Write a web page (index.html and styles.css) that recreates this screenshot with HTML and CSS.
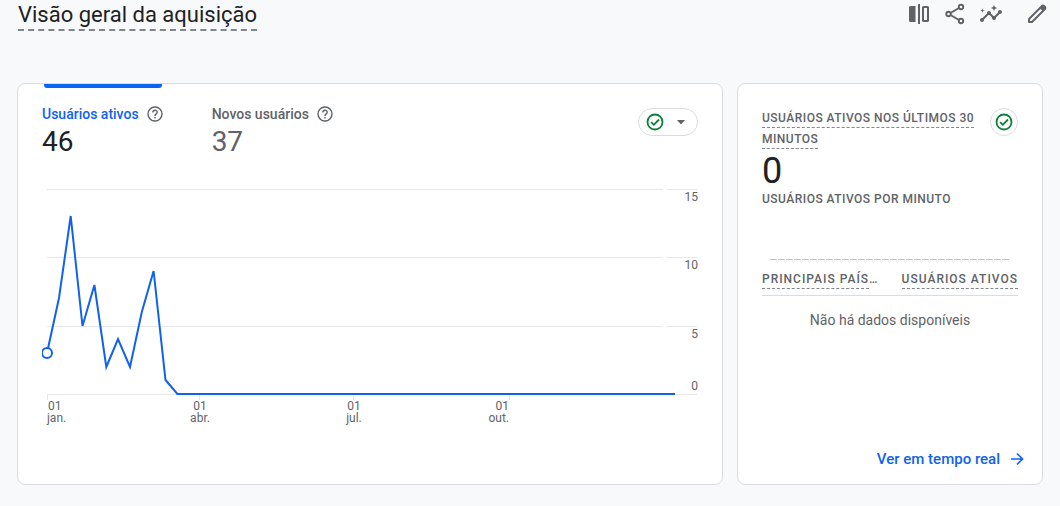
FILE: index.html
```html
<!DOCTYPE html>
<html lang="pt-BR">
<head>
<meta charset="utf-8">
<title>Visão geral da aquisição</title>
<link rel="stylesheet" href="styles.css">
</head>
<body>
<header class="header">
  <h1 class="title">Visão geral da aquisição</h1>
  <div class="actions">
    <button class="icon-button" aria-label="Comparar"><svg width="24" height="24" viewBox="0 0 24 24"><path fill="currentColor" d="M3.500 4H8.500V20H3.500Q2 20 2 18.500V5.500Q2 4 3.500 4ZM11 2H13V22H11Z"/><rect x="16" y="5" width="5" height="14" rx=".6" fill="none" stroke="currentColor" stroke-width="2"/></svg></button>
    <button class="icon-button" aria-label="Compartilhar"><svg width="24" height="24" viewBox="0 0 24 24" fill="none" stroke="currentColor" stroke-width="1.900"><circle cx="5.500" cy="12" r="2.200"/><circle cx="18" cy="5" r="2.200"/><circle cx="18" cy="19" r="2.200"/><path d="M7.500 11l8.500-5M7.500 13l8.500 5"/></svg></button>
    <button class="icon-button" aria-label="Insights"><svg width="24" height="24" viewBox="0 0 24 24" fill="currentColor"><path d="M21 8c-1.450 0-2.260 1.440-1.930 2.510l-3.550 3.560c-.3-.09-.74-.09-1.040 0l-2.550-2.550C12.270 10.450 11.460 9 10 9c-1.450 0-2.270 1.440-1.930 2.520l-4.560 4.550C2.440 15.740 1 16.550 1 18c0 1.100.9 2 2 2 1.450 0 2.260-1.440 1.930-2.510l4.550-4.560c.3.090.74.090 1.040 0l2.550 2.550C12.730 16.550 13.540 18 15 18c1.450 0 2.270-1.440 1.930-2.520l3.560-3.550C21.560 12.260 23 11.450 23 10c0-1.100-.9-2-2-2z"/><path d="M15 9l.94-2.070L18 6l-2.060-.93L15 3l-.92 2.070L12 6l2.080.93zM3.500 11L4 9l2-.5L4 8l-.5-2L3 8l-2 .5L3 9z"/></svg></button>
    <button class="icon-button edit" aria-label="Personalizar relatório"><svg width="24" height="24" viewBox="0 0 24 24"><path fill="none" stroke="currentColor" stroke-width="1.900" stroke-linejoin="round" d="M4 17L17 4Q18 3 19 4L20 5Q21 6 20 7L7 20H4Z"/><path fill="currentColor" d="M14.500 6L17 3.500Q18 2.500 19.200 3.500L20.500 4.800Q21.500 6 20.500 7L18 9.500Z"/></svg></button>
  </div>
</header>
<main class="cards">
  <section class="card overview">
    <div class="overview-top">
      <div class="metrics">
        <button class="metric active"><span class="metric-label">Usuários ativos <svg class="help" width="16" height="16" viewBox="0 0 16 16" fill="none" stroke="currentColor" stroke-width="1.400"><circle cx="8" cy="8" r="7"/><path d="M5.800 6.500C5.800 3.400 10.300 3.500 10.200 6.300C10.200 7.800 8 8 8 9.900"/><path d="M8 11.100v1.500"/></svg></span><span class="metric-value">46</span></button>
        <button class="metric"><span class="metric-label">Novos usuários <svg class="help" width="16" height="16" viewBox="0 0 16 16" fill="none" stroke="currentColor" stroke-width="1.400"><circle cx="8" cy="8" r="7"/><path d="M5.800 6.500C5.800 3.400 10.300 3.500 10.200 6.300C10.200 7.800 8 8 8 9.900"/><path d="M8 11.100v1.500"/></svg></span><span class="metric-value">37</span></button>
      </div>
      <button class="quality" aria-label="Qualidade dos dados"><svg class="check" width="18" height="18" viewBox="0 0 18 18" fill="none" stroke="currentColor" stroke-width="1.800"><circle cx="9" cy="9" r="7.500"/><path d="M5.100 9.200L7.800 11.800L13 6.500"/></svg><svg width="10" height="5" viewBox="0 0 10 5"><path d="M1 0H9L5 4.500Z" fill="currentColor"/></svg></button>
    </div>
    <svg class="chart" viewBox="0 0 656 244" role="img" aria-label="Usuários ativos ao longo do ano">
      <path class="grid" d="M5 5.500H621M625 5.500H655M5 73.500H621M625 73.500H655M5 142.500H621M625 142.500H655M5 210.500H655M5.500 211V216M157.500 211V216M311.500 211V216M467.500 211V216"/>
      <polyline class="series" points="5,169 17,114 28.700,32 40.500,142 52.400,101 64.300,183 76,155 88,183 99.800,128 111.600,87 123.500,196 135.400,210 633,210"/>
      <circle class="marker" cx="5" cy="169" r="5"/>
      <g class="axis" text-anchor="end"><text x="656" y="17">15</text><text x="656" y="85">10</text><text x="656" y="154">5</text><text x="656" y="206">0</text></g>
      <g class="axis"><text x="6" y="226">01</text><text x="5" y="238">jan.</text></g>
      <g class="axis" text-anchor="middle"><text x="158" y="226">01</text><text x="158" y="238">abr.</text><text x="312" y="226">01</text><text x="312" y="238">jul.</text></g>
      <g class="axis" text-anchor="end"><text x="467" y="226">01</text><text x="467" y="238">out.</text></g>
    </svg>
  </section>
  <section class="card realtime">
    <div class="realtime-top">
      <h2 class="caption"><span class="dashed">Usuários ativos nos últimos 30 minutos</span></h2>
      <button class="status" aria-label="Qualidade dos dados"><svg class="check" width="18" height="18" viewBox="0 0 18 18" fill="none" stroke="currentColor" stroke-width="1.800"><circle cx="9" cy="9" r="7.500"/><path d="M5.100 9.200L7.800 11.800L13 6.500"/></svg></button>
    </div>
    <div class="count">0</div>
    <h3 class="caption per-minute">Usuários ativos por minuto</h3>
    <svg class="minutes" viewBox="0 0 240 2" aria-hidden="true"><path d="M0 .5H239" stroke-dasharray="7 1"/></svg>
    <table class="countries">
      <thead><tr><th><span class="dashed">Principais país</span>…</th><th><span class="dashed">Usuários ativos</span></th></tr></thead>
      <tbody><tr><td colspan="2">Não há dados disponíveis</td></tr></tbody>
    </table>
    <a class="link" href="#">Ver em tempo real <svg width="14" height="14" viewBox="0 0 14 14" fill="none" stroke="currentColor" stroke-width="1.700"><path d="M1 7H12M7 1.500L12.500 7L7 12.500"/></svg></a>
  </section>
</main>
</body>
</html>
```
FILE: styles.css
```css
* { box-sizing: border-box; }
body {
  margin: 0;
  padding: 0 17px 21px;
  background: #f8f9fb;
  color: #202124;
  font-family: Roboto, "Liberation Sans", sans-serif;
}
button {
  padding: 0;
  border: 0;
  background: none;
  color: inherit;
  font: inherit;
  text-align: left;
  cursor: pointer;
}
svg { display: block; flex: none; }
.header {
  display: flex;
  justify-content: space-between;
  align-items: flex-start;
  height: 83px;
  padding-left: 1px;
}
.title {
  margin: 0;
  border-bottom: 2px dashed #80868b;
  font-size: 22px;
  line-height: 29px;
  font-weight: 400;
}
.actions {
  display: flex;
  gap: 12px;
  padding-top: 2px;
  color: #5f6368;
}
.icon-button.edit { margin-left: 10px; margin-right: -6px; }
.cards {
  display: grid;
  grid-template-columns: 706fr 306fr;
  gap: 14px;
}
.card {
  min-width: 0;
  min-height: 402px;
  padding: 0 24px;
  border: 1px solid #dadce0;
  border-radius: 8px;
  background: #fff;
}
.overview-top {
  display: flex;
  justify-content: space-between;
  height: 100px;
}
.metrics { display: flex; gap: 49px; }
.metric {
  display: flex;
  flex-direction: column;
  color: #5f6368;
}
.metric::before {
  content: "";
  width: 118px;
  height: 4px;
  margin: 0 0 15px 2px;
  border-radius: 0 0 3px 3px;
}
.metric.active::before { background: #0b64f4; }
.metric-label {
  display: flex;
  align-items: center;
  gap: 8px;
  font-size: 14px;
  line-height: 22px;
  font-weight: 500;
}
.metric.active .metric-label { color: #1062ee; }
.metric .help { color: #5f6368; }
.metric-value { font-size: 28px; line-height: 34px; }
.metric.active .metric-value { color: #202124; }
.quality {
  display: flex;
  align-items: center;
  justify-content: space-between;
  width: 60px;
  height: 28px;
  margin-top: 24px;
  padding: 0 11px 0 7px;
  border: 1px solid #dadce0;
  border-radius: 14px;
  color: #5f6368;
}
.check { color: #0b8038; }
.chart { width: 100%; overflow: hidden; }
.grid { stroke: #e6e7e9; fill: none; }
.series { fill: none; stroke: #1062ee; stroke-width: 2; }
.marker { fill: #fff; stroke: #1062ee; stroke-width: 2; }
.axis { fill: #5f6368; font-size: 12px; }
.realtime {
  display: flex;
  flex-direction: column;
}
.realtime-top {
  display: flex;
  align-items: flex-start;
  padding-top: 24px;
}
.caption {
  flex: 1;
  margin: 0;
  color: #5f6368;
  font-size: 12px;
  line-height: 21px;
  font-weight: 500;
  letter-spacing: 0.04em;
  text-transform: uppercase;
}
.dashed { padding-bottom: 2px; border-bottom: 1px dashed #80868b; }
.status {
  display: grid;
  place-items: center;
  width: 28px;
  height: 28px;
  border: 1px solid #dadce0;
  border-radius: 50%;
}
.count { padding-top: 1px; font-size: 36px; line-height: 40px; }
.per-minute { flex: none; line-height: 16px; }
.minutes { margin: 52px 8px 0; }
.minutes path { stroke: #bdbfc2; fill: none; }
.countries {
  width: 100%;
  table-layout: fixed;
  border-collapse: collapse;
  color: #5f6368;
}
.countries th {
  height: 34px;
  padding: 2px 0 0;
  border-bottom: 1px solid #dadce0;
  font-size: 12px;
  line-height: 22px;
  font-weight: 500;
  letter-spacing: 1px;
  text-align: left;
  text-transform: uppercase;
  white-space: nowrap;
}
.countries th:last-child { text-align: right; }
.countries td {
  padding: 14px 0;
  font-size: 14px;
  line-height: 20px;
  text-align: center;
}
.link {
  display: flex;
  align-items: center;
  align-self: flex-end;
  gap: 10px;
  margin: auto -6px 15px 0;
  color: #1062ee;
  font-size: 15px;
  line-height: 20px;
  font-weight: 500;
  text-decoration: none;
}
```
